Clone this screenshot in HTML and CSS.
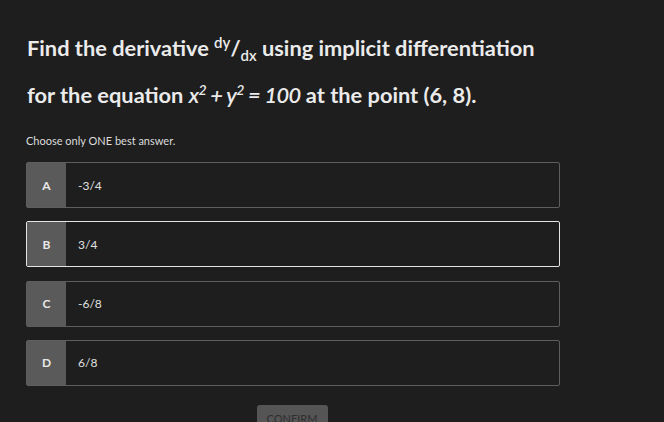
FILE: index.html
```html
<!DOCTYPE html>
<html>
<head>
<meta charset="utf-8">
<link rel="stylesheet" href="styles.css">
</head>
<body>
<main class="quiz">
  <h1 class="question">Find the derivative <span class="frac"><sup>dy</sup>/<sub>dx</sub></span> using implicit differentiation<br>for the equation <span class="eq">x<sup>2</sup> + y<sup>2</sup> = 100</span> at the point (6, 8).</h1>
  <p class="hint">Choose only ONE best answer.</p>
  <div class="options">
    <div class="option"><span class="letter">A</span><span class="answer">-3/4</span></div>
    <div class="option selected"><span class="letter">B</span><span class="answer">3/4</span></div>
    <div class="option"><span class="letter">C</span><span class="answer">-6/8</span></div>
    <div class="option"><span class="letter">D</span><span class="answer">6/8</span></div>
  </div>
  <div class="actions"><button class="confirm">CONFIRM</button></div>
</main>
</body>
</html>
```
FILE: styles.css
```css
html, body {
  margin: 0;
  padding: 0;
  background: #1e1e1e;
  height: 100%;
  overflow: hidden;
}
body {
  font-family: "Lato", "Liberation Sans", sans-serif;
  color: #e6e6e6;
}
.quiz {
  width: 534px;
  padding: 24px 0 0 26px;
}
.question {
  margin: 0;
  font-size: 21.8px;
  font-weight: 700;
  line-height: 47px;
  color: #ebebeb;
  padding-left: 1px;
  white-space: nowrap;
}
.frac sup {
  font-size: 15px;
  font-weight: 600;
  vertical-align: 8px;
  line-height: 0;
}
.frac sub {
  font-size: 15px;
  font-weight: 600;
  vertical-align: -5px;
  line-height: 0;
}
.eq {
  font-style: italic;
  font-weight: 600;
  letter-spacing: -0.6px;
}
.eq sup {
  font-size: 14px;
  vertical-align: 8px;
  line-height: 0;
}
.hint {
  margin: 16px 0 0;
  font-size: 11px;
  line-height: 14px;
  color: #dcdcdc;
}
.options {
  margin-top: 14px;
  display: flex;
  flex-direction: column;
  gap: 13.33px;
}
.option {
  display: flex;
  height: 46px;
  box-sizing: border-box;
  border: 1px solid #5e5e5e;
  border-radius: 2px;
  background: #1e1e1e;
}
.option.selected {
  border: 1.5px solid #e4e4e4;
}
.letter {
  width: 39px;
  flex: none;
  background: #5a5a5a;
  display: flex;
  align-items: center;
  justify-content: center;
  font-size: 12px;
  font-weight: 700;
  color: #e8e8e8;
}
.answer {
  display: flex;
  align-items: center;
  padding-left: 12px;
  font-size: 12px;
  color: #e0e0e0;
}
.actions {
  display: flex;
  justify-content: center;
  margin-top: 19px;
  padding-right: 2px;
}
.confirm {
  width: 71px;
  height: 28px;
  border: none;
  border-radius: 3px;
  background: #555555;
  color: #2e2e2e;
  font-family: "Lato", "Liberation Sans", sans-serif;
  font-size: 11px;
  padding: 0;
}
```
